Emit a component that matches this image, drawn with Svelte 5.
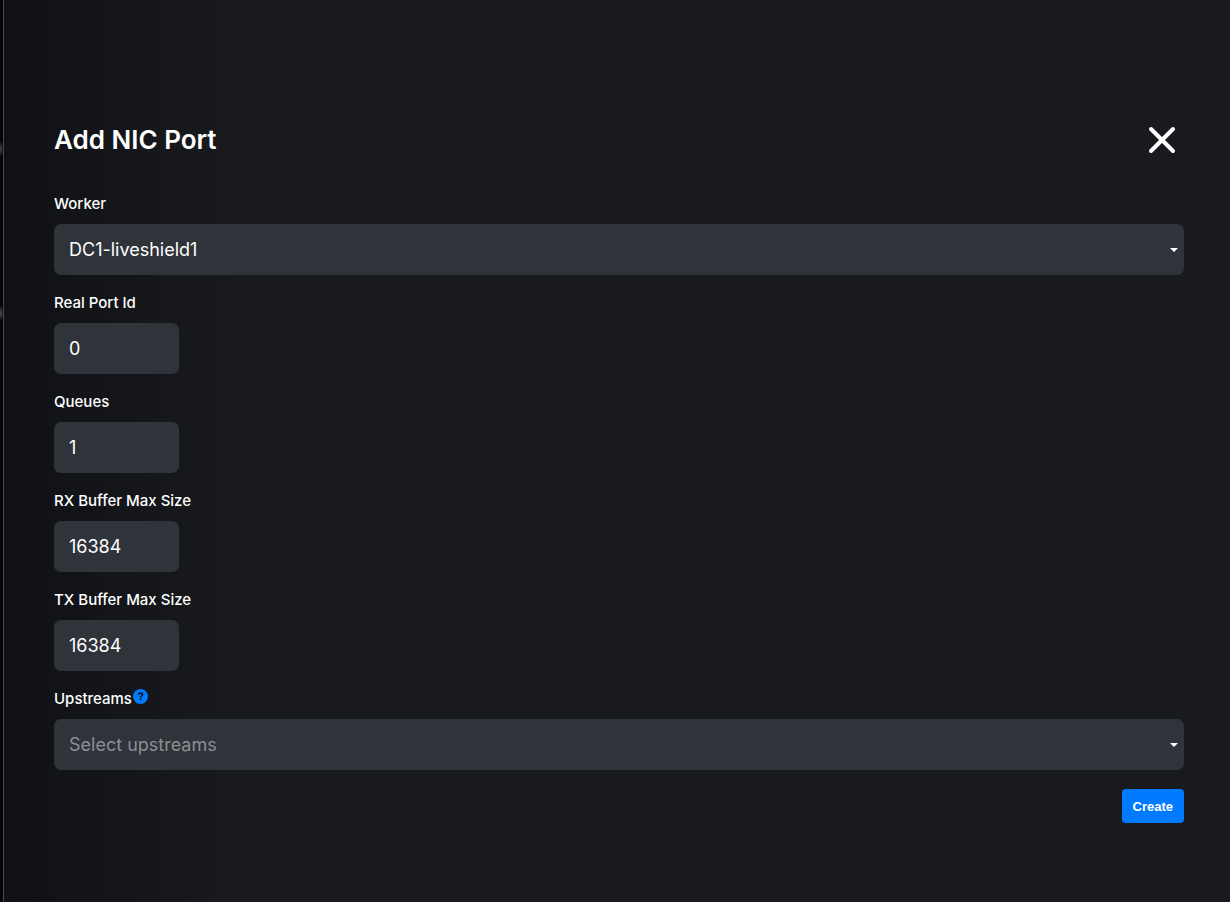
<script lang="ts">
	interface NumberField {
		id: string;
		label: string;
		value: number;
	}

	let worker = $state('DC1-liveshield1');
	let upstream = $state('');

	let fields = $state<NumberField[]>([
		{ id: 'real-port-id', label: 'Real Port Id', value: 0 },
		{ id: 'queues', label: 'Queues', value: 1 },
		{ id: 'rx-buffer', label: 'RX Buffer Max Size', value: 16384 },
		{ id: 'tx-buffer', label: 'TX Buffer Max Size', value: 16384 },
	]);
</script>

{#snippet caret()}
	<svg class="caret" width="8" height="4" viewBox="0 0 8 4" aria-hidden="true">
		<path d="M0 0h8L4 4z" fill="currentColor" />
	</svg>
{/snippet}

<div class="backdrop">
	<main class="panel">
		<header class="panel-header">
			<h1>Add NIC Port</h1>
			<button class="close" type="button" aria-label="Close">
				<svg width="28" height="28" viewBox="0 0 28 28" aria-hidden="true">
					<path d="M3 3l22 22M25 3L3 25" stroke="currentColor" stroke-width="4" stroke-linecap="round" />
				</svg>
			</button>
		</header>

		<form onsubmit={(e) => e.preventDefault()}>
			<div class="field">
				<div class="label-row">
					<label for="worker">Worker</label>
				</div>
				<div class="select">
					<select id="worker" bind:value={worker}>
						<option value="DC1-liveshield1">DC1-liveshield1</option>
					</select>
					{@render caret()}
				</div>
			</div>

			{#each fields as field (field.id)}
				<div class="field">
					<div class="label-row">
						<label for={field.id}>{field.label}</label>
					</div>
					<input id={field.id} type="number" bind:value={field.value} />
				</div>
			{/each}

			<div class="field">
				<div class="label-row">
					<label for="upstreams">Upstreams</label>
					<button class="help" type="button" aria-label="About upstreams">
						<svg width="15" height="15" viewBox="0 0 15 15" aria-hidden="true">
							<circle cx="7.5" cy="7.5" r="7.5" fill="#007bff" />
							<path
								d="M5.4 5.8C5.5 4.6 6.3 4.1 7.5 4.1s2.1 .6 2.1 1.5c0 1.3-2 1.2-2 2.7"
								fill="none"
								stroke="#14171c"
								stroke-width="1.6"
							/>
							<circle cx="7.5" cy="10.3" r="1" fill="#14171c" />
						</svg>
					</button>
				</div>
				<div class="select">
					<select id="upstreams" class:placeholder={!upstream} bind:value={upstream}>
						<option value="">Select upstreams</option>
					</select>
					{@render caret()}
				</div>
			</div>

			<div class="actions">
				<button class="create" type="submit">Create</button>
			</div>
		</form>
	</main>
</div>

<style>
	:global(body) {
		margin: 0;
		background: #03040d;
	}

	.backdrop {
		box-sizing: border-box;
		min-height: 100vh;
		padding-left: 3px;
		display: flex;
		/* blurred edges of the page behind the panel */
		background:
			radial-gradient(ellipse 4px 8px at 0 149px, #4a4b50, transparent),
			radial-gradient(ellipse 4px 8px at 0 313px, #55565a, transparent),
			#03040d;
	}

	.panel {
		box-sizing: border-box;
		flex: 1;
		padding: 120px 46px 40px 50px;
		border-left: 1px solid #46474c;
		background: linear-gradient(to right, #0f1115, #191a1d 240px);
		color: #fff;
		font-family: Inter, 'Liberation Sans', sans-serif;
	}

	.panel-header {
		display: flex;
		align-items: center;
		justify-content: space-between;
		height: 39px;
		margin-bottom: 33px;
		padding-right: 8px;
	}

	h1 {
		margin: 0;
		font-size: 26px;
		line-height: 39px;
		font-weight: 600;
	}

	button {
		border: 0;
		padding: 0;
		background: none;
		color: inherit;
		cursor: pointer;
	}

	button svg {
		display: block;
	}

	.field {
		margin-bottom: 16px;
	}

	.label-row {
		display: flex;
		gap: 1px;
		height: 24px;
		margin-bottom: 8px;
	}

	label {
		font-size: 15px;
		line-height: 24px;
		font-weight: 500;
	}

	.help {
		align-self: flex-start;
		padding-top: 2px;
	}

	input,
	select {
		box-sizing: border-box;
		display: block;
		height: 51px;
		padding: 0 15px;
		border: 0;
		border-radius: 7px;
		background: #2f333a;
		color: #fff;
		font-family: inherit;
		font-size: 18px;
		font-weight: 400;
		appearance: none;
	}

	input {
		width: 125px;
		appearance: textfield;
	}

	.select {
		display: grid;
		align-items: center;
		justify-items: end;
	}

	.select > :global(*) {
		grid-area: 1 / 1;
	}

	select {
		width: 100%;
	}

	select.placeholder {
		color: #8d8f92;
	}

	.caret {
		margin-right: 6px;
		pointer-events: none;
	}

	.actions {
		display: flex;
		justify-content: flex-end;
		padding-top: 3px;
	}

	.create {
		height: 34px;
		padding: 0 11px;
		border-radius: 4px;
		background: #007bff;
		color: #fff;
		font-family: 'Liberation Sans', Arial, sans-serif;
		font-size: 13px;
		font-weight: 700;
	}
</style>
